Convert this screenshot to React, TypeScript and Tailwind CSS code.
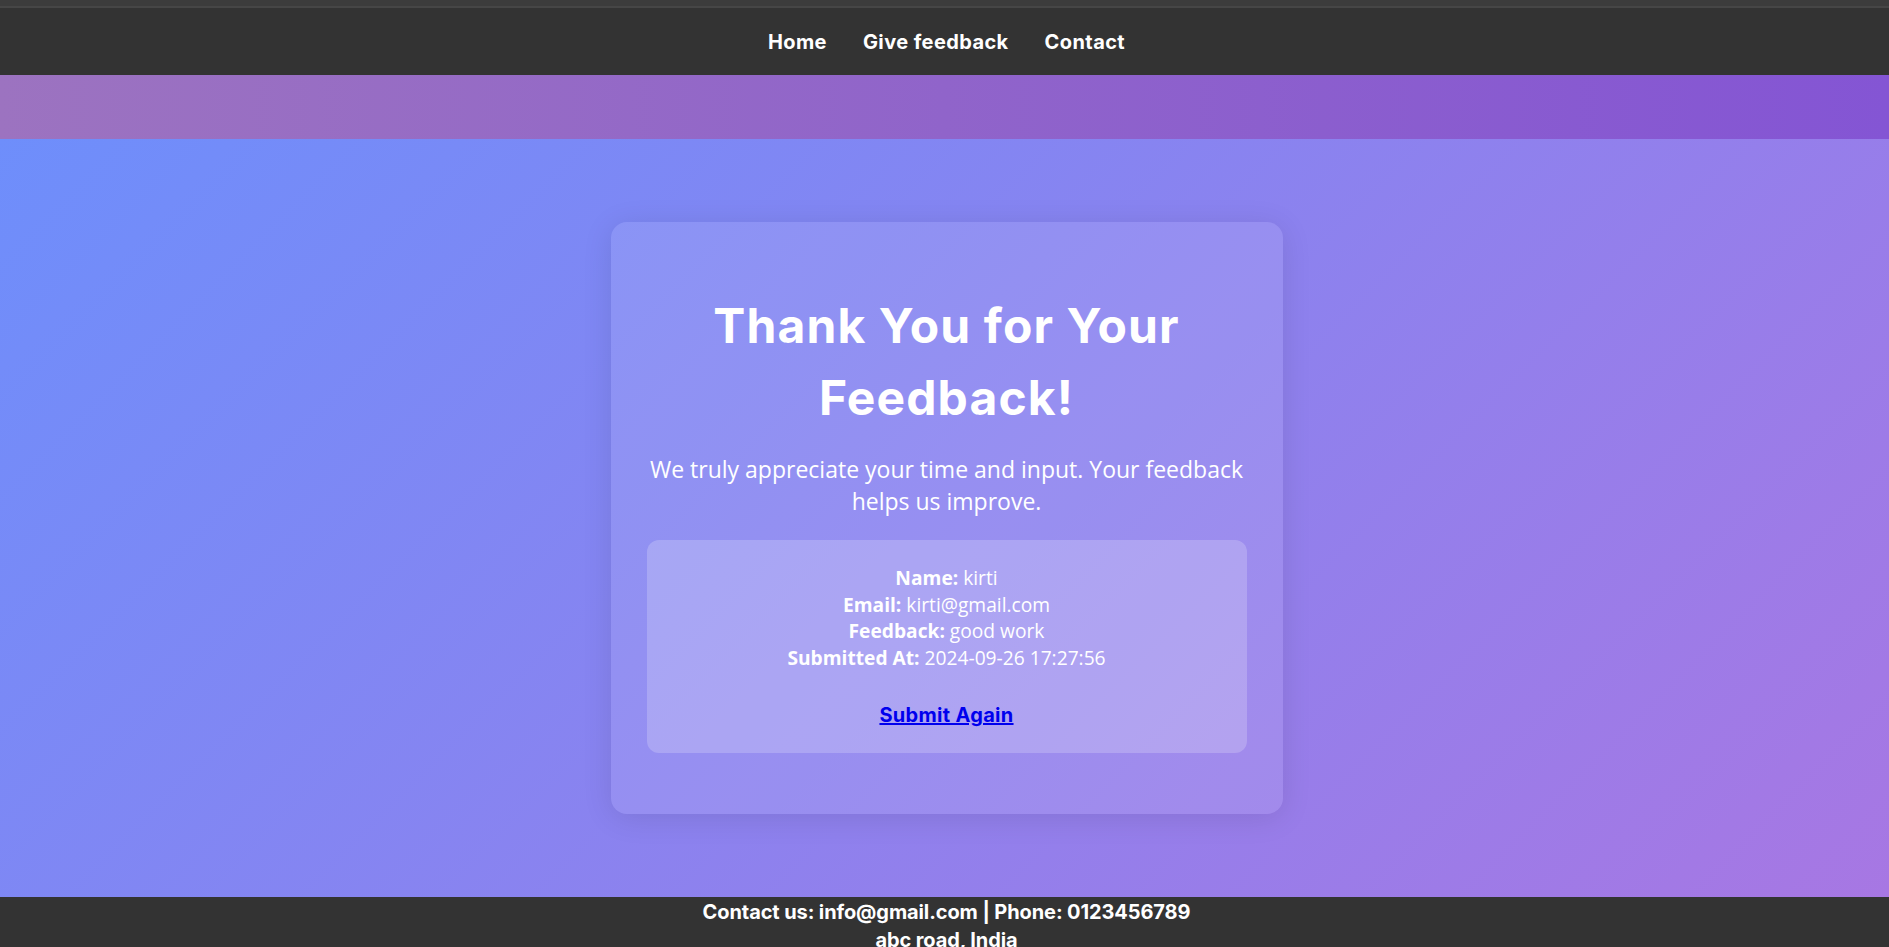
import React from 'react'

const poppins = "font-['Inter','Liberation_Sans',sans-serif]"
const openSans = "font-['Open_Sans','Noto_Sans',sans-serif]"

const navLinks = ["Home", "Give feedback", "Contact"]

const details = [
    { label: "Name:", value: "kirti" },
    { label: "Email:", value: "kirti@gmail.com" },
    { label: "Feedback:", value: "good work" },
    { label: "Submitted At:", value: "2024-09-26 17:27:56" },
]

const App = () => {
    return (
        <div className="min-h-screen flex flex-col bg-[#333333]">
            <div className="h-[6px] bg-[#3c3c3c]" />
            <div className="h-[2px] bg-[#464646]" />
            <nav className="h-[67px] pl-[4px] bg-[#333333] flex items-center justify-center">
                <ul className={`flex gap-[36px] ${poppins} text-[20px] font-bold text-white`}>
                    {navLinks.map((link) => (
                        <li key={link}>
                            <a href="#" className="no-underline tracking-[0.4px]">{link}</a>
                        </li>
                    ))}
                </ul>
            </nav>
            <div className="h-[64px] bg-[linear-gradient(90deg,#9c73c0,#8455d4)]" />

            <main className="min-h-[80vh] pl-[4px] flex items-center justify-center bg-[linear-gradient(135deg,#6e8efb,#a777e3)]">
                <div className="w-[672px] rounded-[16px] bg-white/10 px-[36px] pt-[36px] pb-[61px] text-center text-white shadow-[0_4px_30px_rgba(0,0,0,0.1)]">
                    <h1 className={`mt-[32px] ${poppins} text-[48px] leading-[72px] font-bold tracking-[1.1px]`}>
                        Thank You for Your Feedback!
                    </h1>
                    <p className={`mt-[19px] mb-[23px] ${openSans} text-[23px] leading-[32px]`}>
                        We truly appreciate your time and input. Your feedback helps us improve.
                    </p>
                    <div className="rounded-[12px] bg-white/20 pt-[25px] pb-[24px]">
                        <div className={`${openSans} text-[19.2px] leading-[26.67px]`}>
                            {details.map((d) => (
                                <p key={d.label}>
                                    <strong className="font-bold">{d.label}</strong> {d.value}
                                </p>
                            ))}
                        </div>
                        <a href="#" className={`inline-block mt-[30px] ${poppins} text-[20px] leading-[27px] font-bold tracking-[0.3px] text-[#0000ee] underline`}>
                            Submit Again
                        </a>
                    </div>
                </div>
            </main>

            <footer className={`bg-[#333333] pl-[4px] pt-[1px] pb-[10px] text-center text-white ${poppins} text-[20px] leading-[28px] font-bold tracking-[-0.1px]`}>
                <p>Contact us: info@gmail.com | Phone: 0123456789</p>
                <p>abc road, India</p>
            </footer>
        </div>
    )
}

export default App
